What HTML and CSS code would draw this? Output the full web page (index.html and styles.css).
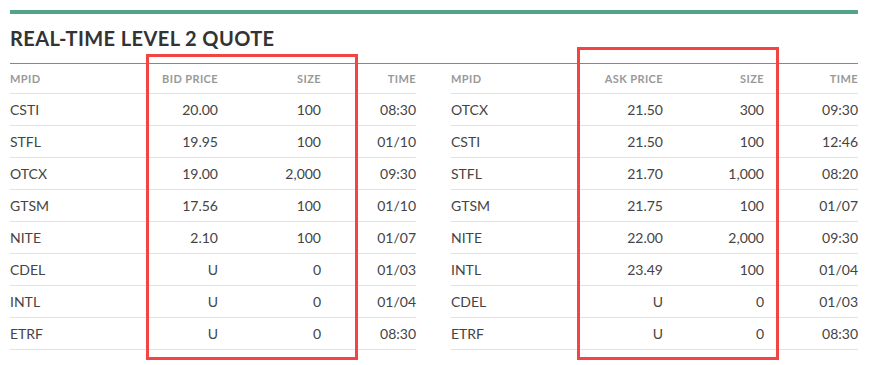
FILE: index.html
```html
<!DOCTYPE html>
<html lang="en">
<head>
    <meta charset="UTF-8">
    <meta name="viewport" content="width=device-width, initial-scale=1.0">
    <title>Level 2 Quote</title>
    <link rel="stylesheet" href="styles.css">
</head>
<body>

<div class="quote">
    <h2 class="quote-title">REAL-TIME LEVEL 2 QUOTE</h2>

    <div class="books">
        <table class="book bid">
            <colgroup>
                <col class="c-mpid"><col class="c-price"><col class="c-size"><col class="c-time">
            </colgroup>
            <thead>
                <tr><th>MPID</th><th class="num">BID PRICE</th><th class="num">SIZE</th><th class="num">TIME</th></tr>
            </thead>
            <tbody>
                <tr><td>CSTI</td><td class="num">20.00</td><td class="num">100</td><td class="num">08:30</td></tr>
                <tr><td>STFL</td><td class="num">19.95</td><td class="num">100</td><td class="num">01/10</td></tr>
                <tr><td>OTCX</td><td class="num">19.00</td><td class="num">2,000</td><td class="num">09:30</td></tr>
                <tr><td>GTSM</td><td class="num">17.56</td><td class="num">100</td><td class="num">01/10</td></tr>
                <tr><td>NITE</td><td class="num">2.10</td><td class="num">100</td><td class="num">01/07</td></tr>
                <tr><td>CDEL</td><td class="num">U</td><td class="num">0</td><td class="num">01/03</td></tr>
                <tr><td>INTL</td><td class="num">U</td><td class="num">0</td><td class="num">01/04</td></tr>
                <tr><td>ETRF</td><td class="num">U</td><td class="num">0</td><td class="num">08:30</td></tr>
            </tbody>
        </table>

        <table class="book ask">
            <colgroup>
                <col class="c-mpid"><col class="c-price"><col class="c-size"><col class="c-time">
            </colgroup>
            <thead>
                <tr><th>MPID</th><th class="num">ASK PRICE</th><th class="num">SIZE</th><th class="num">TIME</th></tr>
            </thead>
            <tbody>
                <tr><td>OTCX</td><td class="num">21.50</td><td class="num">300</td><td class="num">09:30</td></tr>
                <tr><td>CSTI</td><td class="num">21.50</td><td class="num">100</td><td class="num">12:46</td></tr>
                <tr><td>STFL</td><td class="num">21.70</td><td class="num">1,000</td><td class="num">08:20</td></tr>
                <tr><td>GTSM</td><td class="num">21.75</td><td class="num">100</td><td class="num">01/07</td></tr>
                <tr><td>NITE</td><td class="num">22.00</td><td class="num">2,000</td><td class="num">09:30</td></tr>
                <tr><td>INTL</td><td class="num">23.49</td><td class="num">100</td><td class="num">01/04</td></tr>
                <tr><td>CDEL</td><td class="num">U</td><td class="num">0</td><td class="num">01/03</td></tr>
                <tr><td>ETRF</td><td class="num">U</td><td class="num">0</td><td class="num">08:30</td></tr>
            </tbody>
        </table>
    </div>

    <!-- highlight boxes drawn over the price/size columns -->
    <div class="mark mark-bid"></div>
    <div class="mark mark-ask"></div>
</div>

</body>
</html>
```

FILE: styles.css
```css
body {
    margin: 0;
    padding: 10px;
    background: #fff;
    font-family: "Lato", "Open Sans", sans-serif;
    color: #444;
}

.quote {
    position: relative;
    width: 848px;
    border-top: 4px solid #52a38a;
}

.quote-title {
    margin: 0;
    padding: 12px 0 13px;
    font-size: 20px;
    line-height: 24px;
    font-weight: 700;
    letter-spacing: 0.4px;
    color: #333;
    border-bottom: 1px solid #5a9e88;
}

.books {
    display: flex;
    gap: 35px;
}

.book {
    border-collapse: collapse;
    table-layout: fixed;
}

.book.bid {
    width: 406px;
}

.book.ask {
    width: 407px;
}

.bid .c-mpid { width: 108px; }
.bid .c-price { width: 100px; }
.bid .c-size { width: 103px; }
.bid .c-time { width: 95px; }

.ask .c-mpid { width: 112px; }
.ask .c-price { width: 100px; }
.ask .c-size { width: 101px; }
.ask .c-time { width: 94px; }

.book th,
.book td {
    padding: 0;
    text-align: left;
    border-bottom: 1px solid #e2e2e2;
    white-space: nowrap;
}

.book th {
    height: 29px;
    font-size: 11px;
    font-weight: 700;
    letter-spacing: 0.4px;
    color: #999;
}

.book td {
    height: 31px;
    font-size: 14px;
    color: #444;
}

.book .num {
    text-align: right;
}

.mark {
    position: absolute;
    border: 3px solid #f44343;
    box-sizing: border-box;
}

.mark-bid {
    left: 136px;
    top: 40px;
    width: 212px;
    height: 306px;
}

.mark-ask {
    left: 567px;
    top: 33px;
    width: 202px;
    height: 313px;
}
```
